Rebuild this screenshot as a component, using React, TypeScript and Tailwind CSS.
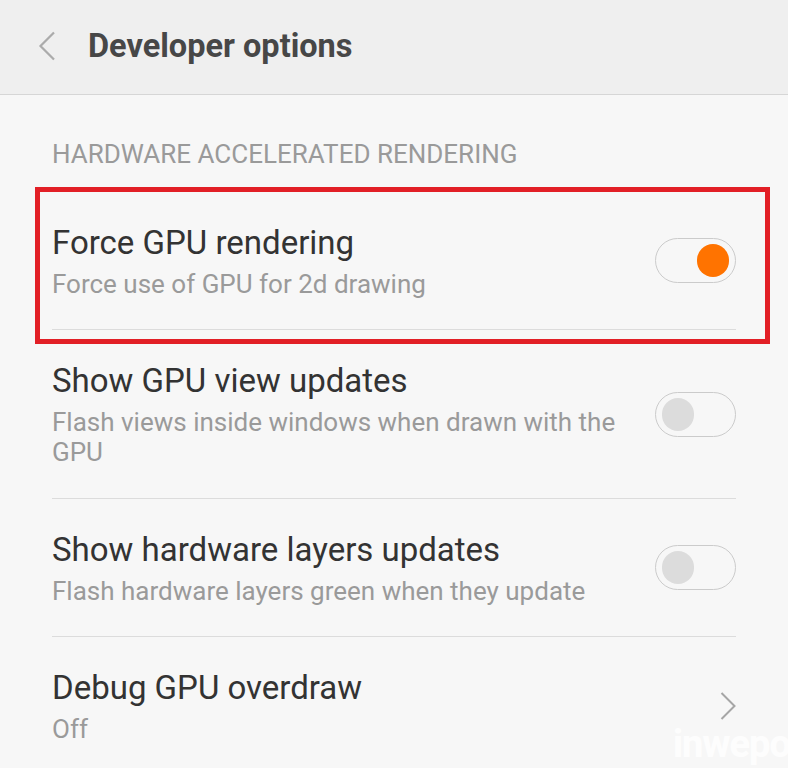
import React from "react";

function Toggle({ on }: { on: boolean }) {
  return (
    <div className="relative w-[81px] h-[45px] rounded-full border border-[#cbcbcb] bg-[#f7f7f7] shrink-0">
      <div
        className={
          on
            ? "absolute top-[5px] right-[6px] w-[32px] h-[33px] rounded-full bg-[#ff7300]"
            : "absolute top-[5px] left-[6px] w-[32px] h-[33px] rounded-full bg-[#dcdcdc]"
        }
      />
    </div>
  );
}

function Row({
  title,
  sub,
  right,
  h,
  divider = true,
}: {
  title: string;
  sub: React.ReactNode;
  right: React.ReactNode;
  h: string;
  divider?: boolean;
}) {
  return (
    <div className={`flex items-center gap-6 ${h} ${divider ? "border-b border-[#dcdcdc]" : ""}`}>
      <div className="flex-1 min-w-0">
        <div className="text-[33px] leading-[40px] text-[#333333]">{title}</div>
        <div className="text-[26px] leading-[30px] text-[#9a9a9a] mt-[6px]">{sub}</div>
      </div>
      {right}
    </div>
  );
}

export default function App() {
  return (
    <div
      className="w-[788px] h-[768px] bg-[#f7f7f7] overflow-hidden relative"
      style={{ fontFamily: "Roboto, 'Noto Sans', sans-serif" }}
    >
      <div className="h-[95px] bg-[#efefef] border-b border-[#d6d6d6] flex items-center">
        <svg width="20" height="30" viewBox="0 0 20 30" className="ml-[37px] mt-[-3px]">
          <path d="M17 1.5 L3.5 15 L17 28.5" fill="none" stroke="#ababab" strokeWidth="2.2" />
        </svg>
        <div className="ml-[31px] text-[32.5px] leading-[40px] font-bold text-[#474747] mt-[-3px]">Developer options</div>
      </div>
      <div className="px-[52px]">
        <div className="pt-[44px] text-[26px] leading-[30px] text-[#9a9a9a]">HARDWARE ACCELERATED RENDERING</div>
        <div className="relative mt-[23px]">
          <Row
            title="Force GPU rendering"
            sub="Force use of GPU for 2d drawing"
            right={<Toggle on />}
            h="h-[138px]"
          />
          <div className="absolute left-[-17px] right-[-34px] top-[-5px] bottom-[-14px] border-[5px] border-[#e21f26] pointer-events-none" />
        </div>
        <Row
          title="Show GPU view updates"
          sub="Flash views inside windows when drawn with the GPU"
          right={<Toggle on={false} />}
          h="h-[169px]"
        />
        <Row
          title="Show hardware layers updates"
          sub="Flash hardware layers green when they update"
          right={<Toggle on={false} />}
          h="h-[138px]"
        />
        <Row
          title="Debug GPU overdraw"
          sub="Off"
          right={
            <svg width="16" height="28" viewBox="0 0 16 28">
              <path d="M1.5 1 L14.5 14 L1.5 27" fill="none" stroke="#a6a6a6" strokeWidth="2" />
            </svg>
          }
          h="h-[138px]"
          divider={false}
        />
      </div>
      <div className="absolute left-[673px] top-[722px] text-[38px] leading-[44px] font-bold text-white/80 tracking-tight whitespace-nowrap">
        inwepo
      </div>
    </div>
  );
}
